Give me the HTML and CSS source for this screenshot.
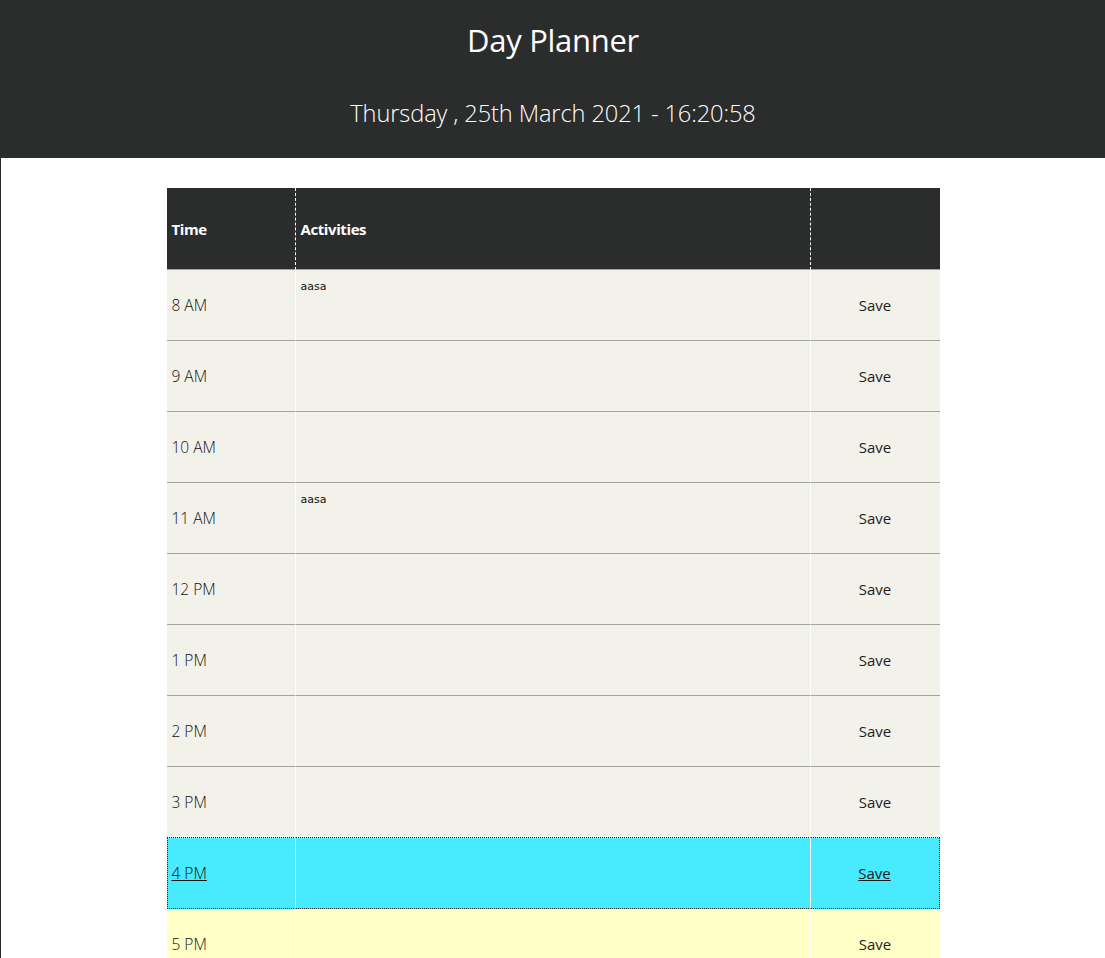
FILE: index.html
```html
<!DOCTYPE html>
<html lang="en">
<head>
<meta charset="utf-8">
<title>Day Planner</title>
<link rel="stylesheet" href="styles.css">
</head>
<body>
<div class="page">
  <header class="jumbo">
    <h1 class="title">Day Planner</h1>
    <p class="date">Thursday , 25th March 2021 - 16:20:58</p>
  </header>
  <table class="planner">
    <thead>
      <tr>
        <th class="c-time">Time</th>
        <th class="c-act">Activities</th>
        <th class="c-save"></th>
      </tr>
    </thead>
    <tbody>
      <tr class="past"><td class="c-time">8 AM</td><td class="c-act"><textarea class="note">aasa</textarea></td><td class="c-save">Save</td></tr>
      <tr class="past"><td class="c-time">9 AM</td><td class="c-act"><textarea class="note"></textarea></td><td class="c-save">Save</td></tr>
      <tr class="past"><td class="c-time">10 AM</td><td class="c-act"><textarea class="note"></textarea></td><td class="c-save">Save</td></tr>
      <tr class="past"><td class="c-time">11 AM</td><td class="c-act"><textarea class="note">aasa</textarea></td><td class="c-save">Save</td></tr>
      <tr class="past"><td class="c-time">12 PM</td><td class="c-act"><textarea class="note"></textarea></td><td class="c-save">Save</td></tr>
      <tr class="past"><td class="c-time">1 PM</td><td class="c-act"><textarea class="note"></textarea></td><td class="c-save">Save</td></tr>
      <tr class="past"><td class="c-time">2 PM</td><td class="c-act"><textarea class="note"></textarea></td><td class="c-save">Save</td></tr>
      <tr class="past before-present"><td class="c-time">3 PM</td><td class="c-act"><textarea class="note"></textarea></td><td class="c-save">Save</td></tr>
      <tr class="present"><td class="c-time"><span class="ul">4 PM</span></td><td class="c-act"><textarea class="note"></textarea></td><td class="c-save"><span class="ul">Save</span></td></tr>
      <tr class="future"><td class="c-time">5 PM</td><td class="c-act"><textarea class="note"></textarea></td><td class="c-save">Save</td></tr>
    </tbody>
  </table>
</div>
</body>
</html>
```

FILE: styles.css
```css
html, body {
  margin: 0;
  padding: 0;
  background: #ffffff;
}

.page {
  border-left: 1px solid #2a2b2b;
  min-height: 958px;
  box-sizing: border-box;
  font-family: "Open Sans", "DejaVu Sans", sans-serif;
  overflow: hidden;
}

.jumbo {
  background: #2b2c2c;
  color: #ffffff;
  text-align: center;
  height: 158px;
  box-sizing: border-box;
  padding-top: 20px;
}

.title {
  margin: 0;
  font-size: 31px;
  line-height: 40px;
  font-weight: 500;
  letter-spacing: -0.3px;
}

.date {
  margin: 38px 0 0;
  font-size: 23.6px;
  line-height: 30px;
  font-weight: 300;
  letter-spacing: -0.1px;
}

.planner {
  width: 773px;
  margin: 30px auto 0;
  border-collapse: separate;
  border-spacing: 0;
  table-layout: fixed;
}

.planner th {
  background: #2b2c2c;
  color: #ffffff;
  height: 81px;
  padding: 0 5px;
  text-align: left;
  font-size: 15px;
  font-weight: 700;
  letter-spacing: -0.4px;
  border-bottom: 1px solid #a3a3a3;
  vertical-align: middle;
}

.planner th.c-time, .planner th.c-act {
  border-right: 1px dashed #ffffff;
}

.c-time { width: 129px; box-sizing: border-box; }
.c-save { width: 129px; box-sizing: border-box; }

.planner td {
  height: 70px;
  padding: 0;
  border-bottom: 1px solid #a3a3a3;
  vertical-align: middle;
  font-size: 15px;
  font-weight: 400;
  color: #1e1e1e;
}

.planner td.c-time {
  padding-left: 5px;
  border-right: 1px solid #ffffff;
  font-weight: 300;
  font-size: 15.5px;
  color: #111111;
}

.planner td.c-act {
  border-right: 1px solid #ffffff;
}

.planner td.c-save {
  text-align: center;
}

.past td { background: #f2f1ea; }
.present td { background: #47eaff; }
.future td { background: #ffffc6; }

.before-present td { border-bottom: 1px dotted #1a2a2a; }
.present td { border-bottom: 1px dotted #1a2a2a; }
.present td.c-time { border-left: 1px dotted #1a2a2a; padding-left: 4px; }
.present td.c-save { border-right: 1px dotted #1a2a2a; }

.ul { text-decoration: underline; }

.note {
  display: block;
  width: 100%;
  height: 70px;
  box-sizing: border-box;
  margin: 0;
  padding: 10px 5px;
  border: none;
  background: transparent;
  resize: none;
  outline: none;
  font-family: "DejaVu Sans", "Open Sans", sans-serif;
  font-size: 11px;
  color: #111;
}
```
